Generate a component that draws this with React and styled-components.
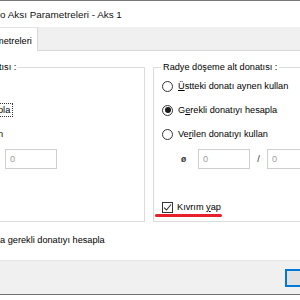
import styled, { createGlobalStyle } from 'styled-components';

const Global = createGlobalStyle`
  html, body {
    margin: 0;
    padding: 0;
    background: #fff;
  }
  body {
    width: 300px;
    height: 300px;
    overflow: hidden;
    font-family: "Liberation Sans", Arial, sans-serif;
    font-size: 9.2px;
    color: #000;
  }
`;

const Window = styled.div`
  width: 300px;
  height: 293px;
  display: flex;
  flex-direction: column;
  border-top: 1px solid #777;
  border-bottom: 1px solid #707070;
  overflow: hidden;
`;

const TitleBar = styled.div`
  height: 26px;
  flex: none;
  display: flex;
  align-items: center;
  background: #fff;
  font-size: 9.9px;
  color: #111;
`;

const TabStrip = styled.div`
  height: 23px;
  flex: none;
  display: flex;
  align-items: flex-end;
  background: #f0f0f0;
  border-bottom: 1px solid #d9d9d9;
`;

const Tab = styled.div`
  height: 24px;
  margin-bottom: -1px;
  padding: 3px 5px 0 0;
  display: flex;
  align-items: center;
  background: #fff;
  border-right: 1px solid #d9d9d9;
  border-top: 1px solid #e3e3e3;
  box-sizing: border-box;
  & > span {
    margin-left: -4px;
  }
`;

const Page = styled.div`
  flex: 1;
  display: flex;
  flex-direction: column;
  background: #fff;
`;

const Groups = styled.div`
  display: flex;
  gap: 8px;
  margin-left: -12px;
  padding-top: 10px;
`;

const Group = styled.fieldset`
  margin: 0;
  padding: 0 0 6px ${p => p.$inset}px;
  border: 1px solid #dcdcdc;
  flex: 0 0 ${p => p.$w}px;
  height: 161px;
  box-sizing: border-box;
  display: flex;
  flex-direction: column;
  min-width: 0;
`;

const Legend = styled.legend`
  padding: 0 2px;
  margin-left: ${p => p.$ml}px;
  line-height: 13px;
  white-space: nowrap;
`;

const Row = styled.div`
  height: 24px;
  display: flex;
  align-items: center;
  white-space: nowrap;
`;

const Radio = styled.span`
  width: 11px;
  height: 11px;
  flex: none;
  border: 1px solid #333;
  border-radius: 50%;
  box-sizing: border-box;
  display: grid;
  place-items: center;
  margin-right: 5px;
  &::after {
    content: '';
    width: 6px;
    height: 6px;
    border-radius: 50%;
    background: ${p => (p.$on ? '#1a1a1a' : 'transparent')};
  }
`;

const Key = styled.span`
  text-decoration: underline;
`;

const Focus = styled.span`
  outline: 1px dotted #333;
  padding: 1px 2px 1px 0;
  margin-left: ${p => p.$ml || 0}px;
`;

const Cut = styled.span`
  margin-left: ${p => p.$ml}px;
`;

const InputRow = styled.div`
  margin-top: 3px;
  height: 20px;
  display: flex;
  align-items: center;
  white-space: nowrap;
`;

const Indent = styled.span`
  width: 19px;
  flex: none;
`;

const Dia = styled.span`
  width: 17px;
  font-size: 8.5px;
  font-weight: bold;
  color: #333;
`;

const Input = styled.div`
  width: 52px;
  height: 20px;
  box-sizing: border-box;
  border: 1px solid #cfcfcf;
  color: #a0a0a0;
  padding-left: 4px;
  display: flex;
  align-items: center;
  flex: none;
  margin-left: ${p => p.$ml || 0}px;
`;

const Slash = styled.span`
  width: 17px;
  text-align: center;
  color: #333;
`;

const CheckRow = styled.div`
  margin-top: auto;
  height: 16px;
  display: flex;
  align-items: center;
  position: relative;
  white-space: nowrap;
`;

const Check = styled.span`
  width: 11px;
  height: 11px;
  box-sizing: border-box;
  border: 1px solid #333;
  margin-right: 4px;
  display: grid;
  place-items: center;
  flex: none;
`;

const RedMark = styled.span`
  position: absolute;
  left: -7px;
  top: 15px;
  width: 67px;
  height: 3px;
  border-radius: 2px;
  background: #e8202a;
`;

const Bottom = styled.div`
  height: 36px;
  display: flex;
  align-items: center;
  white-space: nowrap;
`;

const Footer = styled.div`
  flex: none;
  height: 34px;
  background: #f0f0f0;
  border-top: 1px solid #e4e4e4;
  display: flex;
  justify-content: flex-end;
  align-items: flex-start;
  padding-top: 8px;
  box-sizing: border-box;
`;

const Button = styled.div`
  width: 15px;
  height: 18px;
  border: 2px solid #0078d7;
  border-right: none;
  background: #e1e1e1;
  box-sizing: border-box;
`;

export default function App() {
  return (
    <>
      <Global />
      <Window>
        <TitleBar>o Aksı Parametreleri - Aks 1</TitleBar>
        <TabStrip>
          <Tab><span>metreleri</span></Tab>
        </TabStrip>
        <Page>
          <Groups>
            <Group $w={157} $inset={11}>
              <Legend $ml={-3}>tısı :</Legend>
              <Row />
              <Row>
                <Focus $ml={-2}>pla</Focus>
              </Row>
              <Row>
                <Cut $ml={-2}>n</Cut>
              </Row>
              <InputRow>
                <Input $ml={5}>0</Input>
              </InputRow>
            </Group>
            <Group $w={170} $inset={8}>
              <Legend $ml={-1}>Radye döşeme alt donatısı :</Legend>
              <Row>
                <Radio />
                <span><Key>Ü</Key>stteki donatı aynen kullan</span>
              </Row>
              <Row>
                <Radio $on />
                <span>G<Key>e</Key>rekli donatıyı hesapla</span>
              </Row>
              <Row>
                <Radio />
                <span>Ve<Key>r</Key>ilen donatıyı kullan</span>
              </Row>
              <InputRow>
                <Indent />
                <Dia>ø</Dia>
                <Input>0</Input>
                <Slash>/</Slash>
                <Input>0</Input>
              </InputRow>
              <CheckRow>
                <Check>
                  <svg width="9" height="9" viewBox="0 0 9 9">
                    <path d="M1 4.6 L3.5 7 L8 1.5" fill="none" stroke="#333" strokeWidth="1.1" />
                  </svg>
                </Check>
                <span>Kıvrım <Key>y</Key>ap</span>
                <RedMark />
              </CheckRow>
            </Group>
          </Groups>
          <Bottom>a gerekli donatıyı hesapla</Bottom>
        </Page>
        <Footer>
          <Button />
        </Footer>
      </Window>
    </>
  );
}
